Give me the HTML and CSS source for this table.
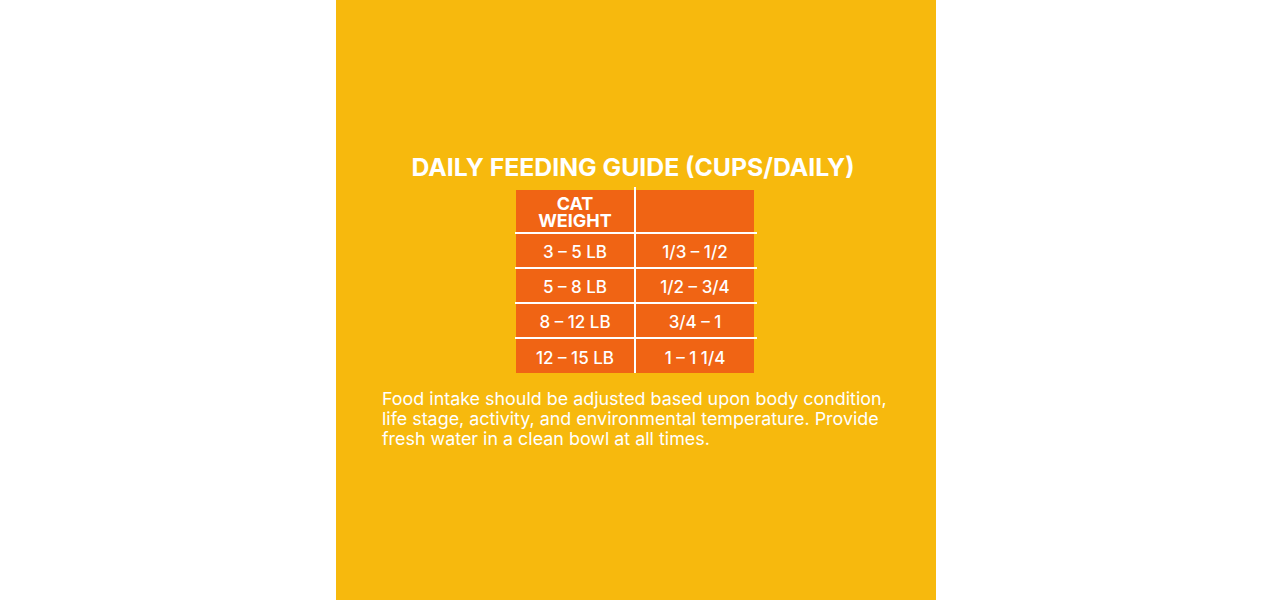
FILE: index.html
```html
<!DOCTYPE html>
<html lang="en">
<head>
<meta charset="utf-8">
<title>Daily Feeding Guide</title>
<link rel="stylesheet" href="styles.css">
</head>
<body>
<main class="panel">
  <h1 class="title">DAILY FEEDING GUIDE (CUPS/DAILY)</h1>
  <div class="guide">
    <div class="cell head">CAT<br>WEIGHT</div>
    <div class="cell head"></div>
    <div class="cell">3 – 5 LB</div>
    <div class="cell">1/3 – 1/2</div>
    <div class="cell">5 – 8 LB</div>
    <div class="cell">1/2 – 3/4</div>
    <div class="cell">8 – 12 LB</div>
    <div class="cell">3/4 – 1</div>
    <div class="cell">12 – 15 LB</div>
    <div class="cell">1 – 1 1/4</div>
  </div>
  <p class="note">Food intake should be adjusted based upon body condition, life stage, activity, and environmental temperature. Provide fresh water in a clean bowl at all times.</p>
</main>
</body>
</html>
```
FILE: styles.css
```css
html, body {
  margin: 0;
  padding: 0;
  background: #ffffff;
}

body {
  font-family: "Inter", "Liberation Sans", sans-serif;
  color: #ffffff;
}

.panel {
  width: 600px;
  height: 600px;
  margin: 0 auto;
  background: #f7b90d;
  display: flex;
  flex-direction: column;
  align-items: center;
  padding-top: 152px;
  box-sizing: border-box;
}

.title {
  margin: 0 6px 0 0;
  font-size: 24.8px;
  line-height: 30px;
  font-weight: 700;
  letter-spacing: 0;
  white-space: nowrap;
}

.guide {
  margin: 8px 2px 0 0;
  display: grid;
  grid-template-columns: 118px 118px;
  grid-template-rows: 42px 33px 33px 33px 34px;
  gap: 2px;
  background: #ffffff;
  position: relative;
}

.guide::before {
  content: "";
  position: absolute;
  left: 118px;
  top: -3px;
  width: 2px;
  height: 3px;
  background: #ffffff;
}

.cell {
  background: #f06414;
  display: flex;
  align-items: center;
  justify-content: center;
  text-align: center;
  font-size: 17px;
  font-weight: 500;
  padding-top: 3px;
  position: relative;
}

.cell.head {
  font-size: 18px;
  font-weight: 700;
  line-height: 17px;
  padding-top: 1px;
}

.cell:nth-child(2n+3)::before {
  content: "";
  position: absolute;
  left: -1px;
  top: -2px;
  width: 1px;
  height: 2px;
  background: #ffffff;
}

.cell:nth-child(2n+4)::after {
  content: "";
  position: absolute;
  right: -3px;
  top: -2px;
  width: 3px;
  height: 2px;
  background: #ffffff;
}

.note {
  align-self: flex-start;
  margin: 16px 0 0 46px;
  width: 510px;
  font-size: 17.9px;
  line-height: 20px;
}
```
